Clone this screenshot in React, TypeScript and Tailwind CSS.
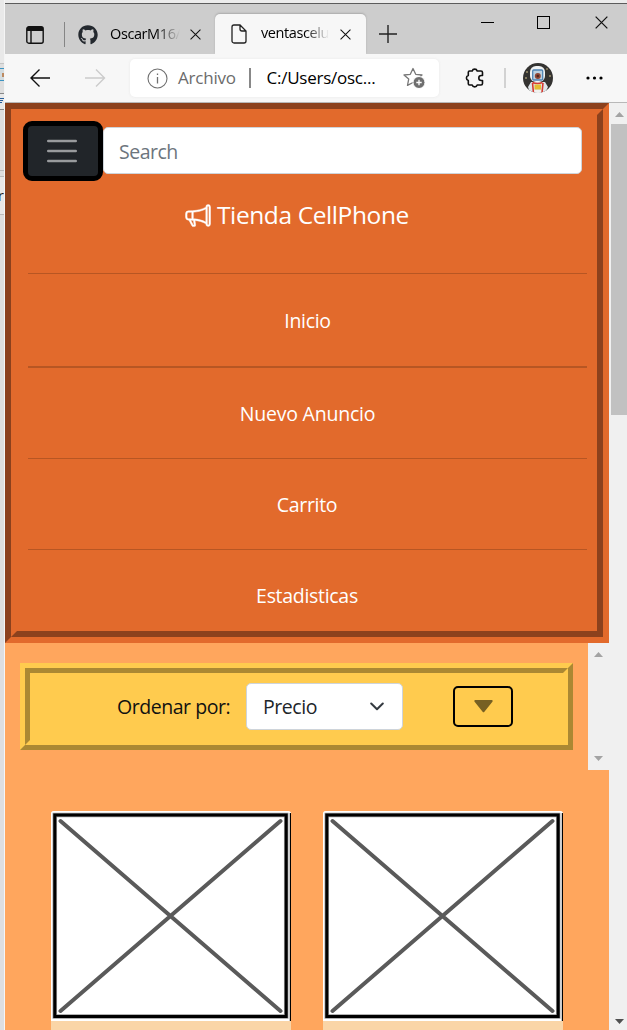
import React from "react";
import { FaGithub } from "react-icons/fa";
import { BsMegaphone } from "react-icons/bs";

const X = ({ size }: { size: number }) => (
  <svg width={size} height={size} viewBox="0 0 12 12" fill="none" stroke="#111" strokeWidth="1.15" className="shrink-0">
    <path d="M.6.6 11.4 11.4M11.4.6.6 11.4" />
  </svg>
);

function Desktop() {
  return (
    <div className="flex w-[5px] shrink-0 flex-col overflow-hidden border-r border-[#f5f5f5] bg-[#dedede]">
      <div className="h-[64px] shrink-0 border-b border-[#c4c4c4] bg-[#e9e9e9]" />
      <div className="mt-1 h-[13px] border-y border-[#3c93c1] bg-[#d3dce0]">
        <div className="ml-[2px] mt-1 h-1 w-[2px] bg-[#bd8a61]" />
      </div>
      <div className="mt-3 h-[17px] border-y border-[#888] bg-[#e8e8e8] pt-1">
        <div className="h-px w-1 bg-[#295f9c]" />
        <div className="mt-px h-px w-[3px] bg-[#295f9c]" />
        <div className="mt-px h-px w-[2px] bg-[#295f9c]" />
      </div>
      <div className="mt-[60px] h-[7px] border-y border-[#bbb]" />
      <div className="flex h-[38px] items-center justify-end border-b border-[#bbb] bg-[#e8e8e8] text-[15px] text-[#222]">er</div>
    </div>
  );
}

function TabBar() {
  return (
    <div className="flex h-[51px] border-t border-[#5c5c5c] bg-[#cdcdcd] text-[14.5px] tracking-[-0.4px] text-black">
      <div className="flex w-[210px] items-center rounded-br-[5px] pl-[21px] pt-[11px]">
        <svg width="18" height="18" viewBox="0 0 18 18" fill="none" stroke="#111" strokeWidth="1.4">
          <rect x=".8" y=".8" width="16.4" height="16.4" rx="2" />
          <path d="M1 3h16M5 5v12" />
          <path d="M1 3h16" strokeWidth="4" />
        </svg>
        <div className="ml-5 h-[25px] w-px bg-[#858585]" />
        <FaGithub className="ml-[13px] size-5 shrink-0 text-[#24292f]" />
        <span className="-mt-[2px] ml-3 w-[70px] overflow-hidden whitespace-nowrap [mask-image:linear-gradient(to_right,black_65%,transparent_100%)]">OscarM16/</span>
        <span className="ml-[10px]"><X size={11} /></span>
      </div>
      <div className="mt-[10px] flex w-[151px] items-center rounded-t-[5px] bg-[#f7f7f7] pl-4 shadow-[0_-1px_2px_#aaa]">
        <svg width="16" height="20" viewBox="0 0 16 20" fill="none" stroke="#222" strokeWidth="1.3">
          <path d="M3 1h6l6 6v10a2 2 0 0 1-2 2H3a2 2 0 0 1-2-2V3a2 2 0 0 1 2-2ZM9 1v4a2 2 0 0 0 2 2h4" />
        </svg>
        <span className="-mt-[2px] ml-[14px] w-[68px] overflow-hidden whitespace-nowrap [mask-image:linear-gradient(to_right,black_65%,transparent_100%)]">ventascelu</span>
        <span className="ml-[11px]"><X size={11} /></span>
      </div>
      <svg className="ml-[13px] mt-[21px]" width="18" height="18" fill="none" stroke="#222" strokeWidth="1.4"><path d="M9 0v18M0 9h18" /></svg>
      <svg className="ml-[84px] mt-[12px]" width="14" height="14" fill="none" stroke="#000"><path d="M0 6.5h13" /></svg>
      <svg className="ml-[42px] mt-[12px]" width="14" height="14" fill="none" stroke="#000"><rect x=".5" y=".5" width="12" height="12" /></svg>
      <span className="ml-[44px] mt-[12px]"><X size={13} /></span>
    </div>
  );
}

function Avatar() {
  return (
    <svg width="30" height="30" viewBox="0 0 30 30" className="ml-[16px] shrink-0">
      <clipPath id="avatar"><circle cx="15" cy="15" r="15" /></clipPath>
      <g clipPath="url(#avatar)">
        <rect width="30" height="30" fill="#343331" />
        <circle cx="4" cy="9" r=".8" fill="#ead89b" /><circle cx="3" cy="15" r=".8" fill="#ead89b" /><circle cx="27" cy="13" r=".8" fill="#ead89b" /><circle cx="24" cy="6" r=".7" fill="#ead89b" />
        <path d="M8 19 5 24l2 6h15l3-6-3-5Z" fill="#dfe5e9" />
        <rect x="7" y="3" width="15" height="16" rx="6" fill="#f0f3f4" />
        <rect x="9.7" y="7" width="10" height="10" rx="1" fill="#bad0e0" stroke="#4d83b4" strokeWidth="1.3" />
        <circle cx="14.8" cy="13" r="3" fill="#8f4636" /><circle cx="14.8" cy="13" r="1.2" fill="#4d251f" />
        <path d="M9.5 19.5q5 2 10 0M9.5 20l1 10M20 20l-1 10" fill="none" stroke="#d63a30" strokeWidth="1.6" />
        <path d="M11.5 21.5h6.5v5h-6.5Z" fill="#e5bd2f" /><path d="M11.5 27h6.5v3h-6.5Z" fill="#f1f1ef" />
      </g>
    </svg>
  );
}

function Toolbar() {
  return (
    <div className="flex h-12 items-center bg-[#f7f7f7] pl-[25px] text-[17px]">
      <svg width="21" height="18" viewBox="0 0 21 18" fill="none" stroke="#111" strokeWidth="1.4"><path d="M20 9H1M9.5.6 1 9l8.5 8.4" /></svg>
      <svg className="ml-[34px]" width="21" height="18" viewBox="0 0 21 18" fill="none" stroke="#ccc" strokeWidth="1.4"><path d="M0 9h19M11 .6 19.5 9 11 17.4" /></svg>
      <div className="ml-[24px] flex h-[38px] w-[309px] shrink-0 items-center rounded-[5px] bg-white pl-[17px] shadow-[0_0_3px_#e8e8e8]">
        <svg width="21" height="21" viewBox="0 0 21 21" fill="none" stroke="#707070" strokeWidth="1.1"><circle cx="10.5" cy="10.5" r="9.5" /><path d="M10.5 9v6.5M10.5 5.500v1.6" strokeWidth="1.3" /></svg>
        <span className="ml-[10px] w-[60px] whitespace-nowrap tracking-[-0.2px] text-[#6b6b6b]">Archivo</span>
        <span className="ml-[11px] h-5 w-[1.5px] bg-[#888]" />
        <span className="ml-4 w-[112px] whitespace-nowrap tracking-[-0.25px] text-black">C:/Users/osc...</span>
        <svg className="ml-[24px]" width="23" height="22" viewBox="0 0 23 22" fill="none" stroke="#777" strokeWidth="1.3" strokeLinejoin="round">
          <path d="m10 1.500 2.700 5.800 6.300.700-4.700 4.100 1.200 6.300L10 15.500 4.500 18.400l1.200-6.300L1 8l6.300-.700Z" />
          <circle cx="16" cy="15.5" r="6" fill="#6e6e6e" stroke="#fff" strokeWidth="1" /><path d="M16 12.800v5.400M13.300 15.500h5.400" stroke="#fff" />
        </svg>
      </div>
      <svg className="ml-[26px] shrink-0" width="20" height="22" viewBox="0 0 20 22" fill="none" stroke="#111" strokeWidth="1.6" strokeLinejoin="round">
        <path d="M4.500 4h2.700a2.600 2.600 0 0 1 5 0H16q1.500 0 1.500 1.500v3H16.300a2.500 2.500 0 0 0 0 5H17.500v3q0 1.500-1.500 1.500H12.200a2.600 2.600 0 0 1-5 0H4.500Q3.300 18 3.300 16.800v-3.300a2.600 2.600 0 0 1 0-5V5.200Q3.300 4 4.500 4Z" />
      </svg>
      <div className="ml-[19px] h-5 w-[1.5px] bg-[#d2d2d2]" />
      <div className="pl-px"><Avatar /></div>
      <svg className="ml-[33px] shrink-0" width="17" height="4"><circle cx="2" cy="2" r="1.6" /><circle cx="8.5" cy="2" r="1.6" /><circle cx="15" cy="2" r="1.6" /></svg>
    </div>
  );
}

const Arrow = ({ down = false, dark = false }: { down?: boolean; dark?: boolean }) => (
  <svg width="9" height="5" viewBox="0 0 9 5" fill={dark ? "#505050" : "#a3a3a3"}>
    <path d={down ? "M0 0h9L4.5 5Z" : "M0 5h9L4.5 0Z"} />
  </svg>
);

const Rule = ({ thick = false }: { thick?: boolean }) => (
  <div className={thick ? "-mt-px h-[2px] bg-[#b75623]" : "h-px bg-[#b75623]"} />
);

function Header() {
  return (
    <header className="h-[540px] border-t-6 border-r-6 border-b-6 border-l-6 border-t-[#8c411d] border-r-[#e26a2c] border-b-[#e26a2c] border-l-[#8c411d]">
      <div className="h-full border-6 border-t-[#e26a2c] border-r-[#8c411d] border-b-[#8c411d] border-l-[#e26a2c] bg-[#e26a2c] text-white">
        <div className="ml-[6px] mt-[6px] flex h-[60px]">
          <button className="flex h-[60px] w-20 shrink-0 items-center justify-center rounded-[9px] border-5 border-black bg-[#212529]">
            <svg width="30" height="24" viewBox="0 0 30 24" stroke="#999b9d" strokeWidth="2.4" strokeLinecap="round" className="mb-px mr-[2px]"><path d="M1.2 2h27.600M1.2 12h27.600M1.2 22h27.600" /></svg>
          </button>
          <input placeholder="Search" className="mt-[6px] h-[47px] w-[479px] rounded-[5px] border border-[#ced4da] bg-white px-[15px] pt-[2px] text-[19.5px] tracking-[-0.5px] placeholder:text-[#6c757d]" />
        </div>
        <div className="mt-[18px] flex h-8 items-center pl-[168px]">
          <BsMegaphone className="h-[25px] w-[26px] stroke-[0.3]" />
          <span className="ml-[6px] whitespace-nowrap text-[24.5px] tracking-[-0.4px]">Tienda CellPhone</span>
        </div>
        <nav className="ml-[11px] mt-[42px] w-[559px] text-center text-[19.5px] tracking-[-0.3px]">
          <Rule />
          <div className="flex h-[93px] items-center justify-center pt-px">Inicio</div>
          <Rule thick />
          <div className="flex h-[90px] items-center justify-center pt-px tracking-[-0.22px]">Nuevo Anuncio</div>
          <Rule />
          <div className="flex h-[90px] items-center justify-center pr-px pt-px">Carrito</div>
          <Rule />
          <div className="flex h-[81px] items-center justify-center pr-px pt-[11px]">Estadisticas</div>
        </nav>
      </div>
    </header>
  );
}

function SortPanel() {
  return (
    <section className="flex h-[127px]">
      <div className="flex-1 pl-[15px] pr-[15px] pt-5">
        <div className="h-[87px] border-5 border-t-[#ffcb4e] border-r-[#ab8833] border-b-[#ab8833] border-l-[#ffcb4e]">
          <div className="flex h-full items-center border-5 border-t-[#ab8833] border-r-[#ffcb4e] border-b-[#ffcb4e] border-l-[#ab8833] bg-[#ffcb4e] pl-[87px] text-[19.5px] tracking-[-0.45px] text-[#111]">
            <span className="w-[114px] whitespace-nowrap">Ordenar por:</span>
            <div className="ml-[15px] flex h-[47px] w-[157px] items-center justify-between rounded-[5px] border border-[#ced4da] bg-white pl-4 pr-[18px] text-[#212529]">
              <span>Precio</span>
              <svg width="14" height="9" viewBox="0 0 14 9" fill="none" stroke="#343a40" strokeWidth="2" strokeLinecap="round" strokeLinejoin="round"><path d="m1.200 1.500 5.800 5.800 5.800-5.800" /></svg>
            </div>
            <button className="ml-[50px] flex h-[41px] w-[60px] items-center justify-center rounded-[5px] border-2 border-black">
              <svg width="19" height="13" viewBox="0 0 19 13" fill="#776023" className="-mt-px"><path d="M1.400 0h16.200a1 1 0 0 1 .8 1.700l-8 10a1.200 1.200 0 0 1-1.800 0l-8-10A1 1 0 0 1 1.400 0Z" /></svg>
            </button>
          </div>
        </div>
      </div>
      <div className="flex w-[21px] flex-col items-center justify-between bg-[#f0f0f0] pb-[9px] pt-[9px]">
        <Arrow />
        <Arrow down />
      </div>
    </section>
  );
}

const Card = () => (
  <article className="flex h-[219px] w-60 flex-col overflow-hidden rounded-t-[3px] bg-[#fad5a7]">
    <svg width="240" height="210" viewBox="0 0 240 210" className="shrink-0">
      <rect width="240" height="210" fill="#fff" />
      <rect x="3.8" y="4" width="231.4" height="201.5" fill="none" stroke="#999" strokeWidth="4.5" />
      <rect x="3.8" y="4" width="231.4" height="201.5" fill="none" stroke="#000" strokeWidth="3" />
      <path d="M239.4 2v208" stroke="#000" strokeWidth="1.2" />
      <path d="m9.5 10 220 190M229.5 10l-220 190" stroke="#5a5a5a" strokeWidth="4" strokeLinecap="round" />
    </svg>
  </article>
);

export default function App() {
  return (
    <div className="flex h-[1030px] w-[627px] flex-col overflow-hidden bg-[#ececec] font-['Open_Sans','Noto_Sans',sans-serif]">
      <div className="flex h-full">
        <Desktop />
        <div className="flex w-[622px] shrink-0 flex-col pt-[3px]">
          <TabBar />
          <Toolbar />
          <div className="flex h-[928px] border-t border-[#b8b8b8]">
            <div className="w-[604px] bg-[#ffa65d]">
              <Header />
              <SortPanel />
              <div className="flex gap-8 pl-[46px] pt-[41px]">
                <Card />
                <Card />
              </div>
            </div>
            <div className="flex w-[18px] flex-col items-center bg-[#f0f0f0] pl-[2px] pt-[9px]">
              <Arrow />
              <div className="mt-[7px] h-[291px] w-4 bg-[#c1c1c1]" />
              <div className="mt-auto pb-[6px]"><Arrow down dark /></div>
            </div>
          </div>
        </div>
      </div>
    </div>
  );
}
